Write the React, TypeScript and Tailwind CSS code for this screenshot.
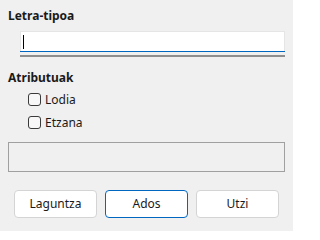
import React from "react"

const font = { fontFamily: '"Noto Sans", "Liberation Sans", sans-serif' }

const Check: React.FC<{ label: string }> = ({ label }) => (
  <label className="flex items-center h-[23px] pl-[20px] gap-[4px] text-[12px] text-[#1a1a1a]">
    <span className="w-[13px] h-[13px] border border-[#3a3a3a] rounded-[3px] bg-[#f7f7f7]" />
    <span>{label}</span>
  </label>
)

const Btn: React.FC<{ label: string; primary?: boolean }> = ({ label, primary }) => (
  <button
    type="button"
    className={
      primary
        ? "w-[83px] h-[28px] rounded-[4px] bg-white border border-[#0067c0] text-[12px] text-[#1a1a1a]"
        : "w-[83px] h-[28px] rounded-[4px] bg-white border border-[#d4d4d4] text-[12px] text-[#1a1a1a]"
    }
  >
    {label}
  </button>
)

export default function App() {
  return (
    <div style={font} className="w-[293px] h-[231px] bg-[#f0f0f0] px-[8px] pt-[8px] text-[#1a1a1a]">
      <div className="text-[12px] leading-[16px] font-bold">Letra-tipoa</div>
      <div className="ml-[12px] mt-[7px] w-[265px]">
        <div className="h-[20px] bg-white border-x border-t border-[#e5e5e5] flex items-center pl-[2px]">
          <span className="w-px h-[14px] bg-black" />
        </div>
        <div className="h-px bg-[#0067c0]" />
        <div className="mt-[3px] h-[2px] bg-[#8e8e8e]" />
      </div>
      <div className="mt-[13px] text-[12px] leading-[16px] font-bold">Atributuak</div>
      <div className="mt-[2px]">
        <Check label="Lodia" />
        <Check label="Etzana" />
      </div>
      <div className="mt-[8px] w-[277px] h-[30px] border border-[#a0a0a0]" />
      <div className="mt-[18px] flex gap-[8px] pl-[6px]">
        <Btn label="Laguntza" />
        <Btn label="Ados" primary />
        <Btn label="Utzi" />
      </div>
    </div>
  )
}
